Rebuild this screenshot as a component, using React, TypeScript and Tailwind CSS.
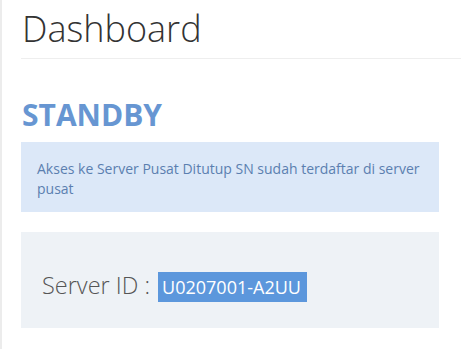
export default function App() {
  return (
    <div className="w-[461px] h-[349px] bg-white border-l-2 border-[#ececec] overflow-hidden font-['Open_Sans',sans-serif]">
      <div className="pl-[19px]">
        {/* Header */}
        <div className="pt-[11px] pb-[11px] border-b border-[#eeeeee]">
          <h1 className="text-[36px] leading-none font-light text-[#333] pl-px">Dashboard</h1>
        </div>

        <div className="pr-[22px]">
          <h2 className="mt-[41px] text-[30px] leading-none font-bold text-[#6796d2] pl-px">STANDBY</h2>

          {/* Alert */}
          <div className="mt-[12px] bg-[#dce8f8] px-[16px] pt-[17px] h-[70px]">
            <p className="text-[14px] leading-[20px] text-[#5b7fb0]">
              Akses ke Server Pusat Ditutup SN sudah terdaftar di server pusat
            </p>
          </div>

          {/* Server */}
          <div className="mt-[20px] bg-[#eef2f6] h-[96px] flex items-baseline pt-[40px] pl-[21px]">
            <span className="text-[23.5px] font-light text-[#555] leading-none">Server ID :</span>
            <span className="ml-[8px] bg-[#5c97dc] text-white text-[18px] leading-[30px] pl-[4px] pr-[6px]">U0207001-A2UU</span>
          </div>
        </div>
      </div>
    </div>
  );
}
